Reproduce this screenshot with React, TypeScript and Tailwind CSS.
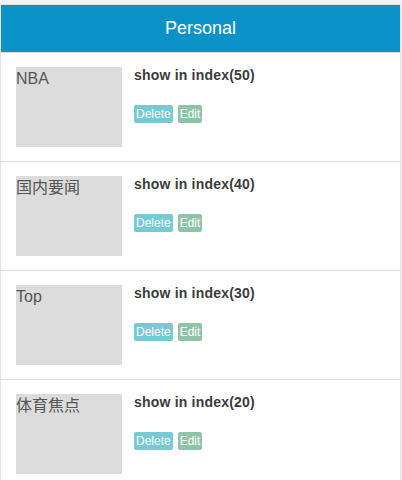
import React from "react";

const items = [
  { name: "NBA", count: 50 },
  { name: "国内要闻", count: 40 },
  { name: "Top", count: 30 },
  { name: "体育焦点", count: 20 },
];

export default function App() {
  return (
    <div
      className="pt-[4px] bg-[#f2f2f2]"
      style={{ fontFamily: '"Liberation Sans", Arial, "Noto Sans CJK SC", sans-serif' }}
    >
      <div className="w-[401px] border-x border-t border-[#e3e3e3] bg-white">
        <div className="h-[47px] bg-[#0b93c7] text-white text-[18px] flex items-center justify-center">
          Personal
        </div>
        {items.map((it) => (
          <div key={it.name} className="border-t border-[#dddddd] pt-[14px] pb-[14px] pl-[15px] flex">
            <div className="w-[106px] h-[80px] bg-[#dcdcdc] text-[#555555] text-[16px] leading-[24px]">
              {it.name}
            </div>
            <div className="ml-[12px]">
              <div className="text-[14px] font-bold text-[#3b3b3b] tracking-[0.2px] leading-[17px]">
                show in index({it.count})
              </div>
              <div className="mt-[21px] flex gap-[5px]">
                <span className="bg-[#77c9d4] text-white text-[12px] leading-[18px] px-[2px] rounded-[2px]">
                  Delete
                </span>
                <span className="bg-[#8fc4a8] text-white text-[12px] leading-[18px] px-[2px] rounded-[2px]">
                  Edit
                </span>
              </div>
            </div>
          </div>
        ))}
      </div>
    </div>
  );
}
